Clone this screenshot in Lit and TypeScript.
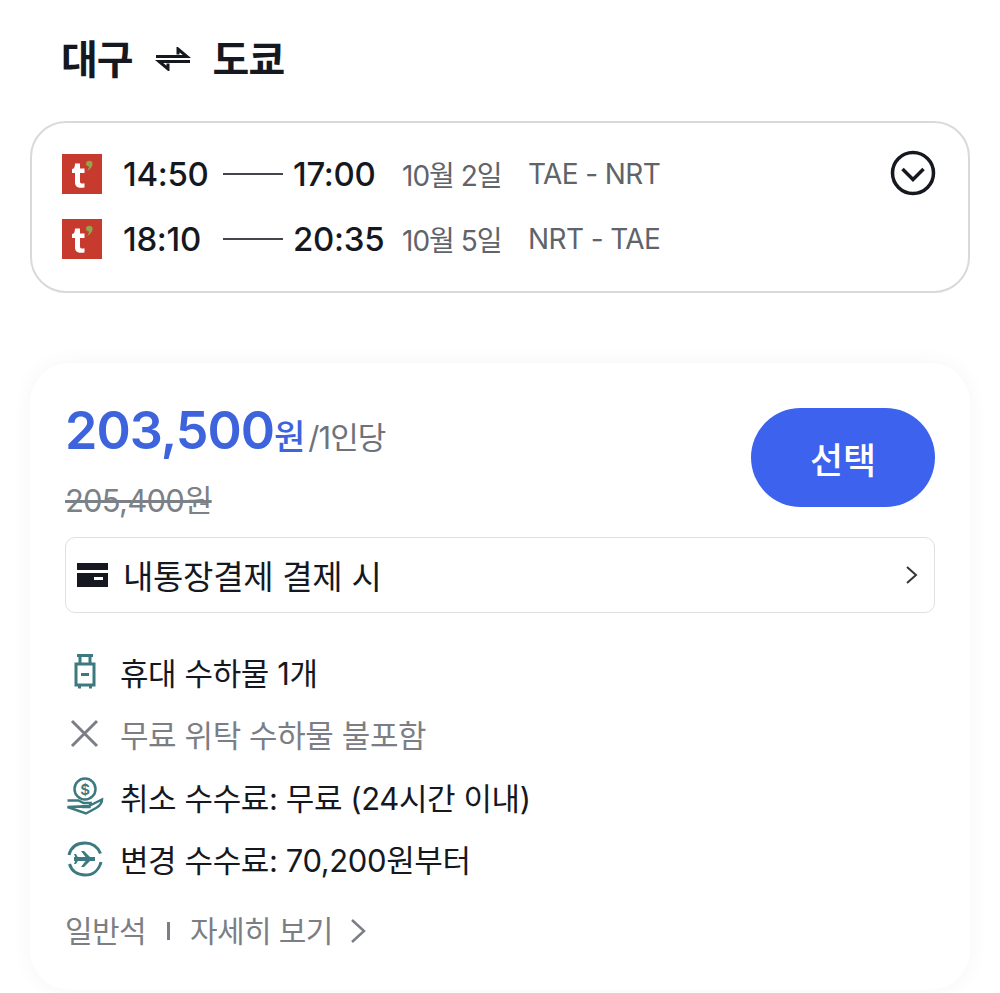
import { LitElement, html, css } from 'lit';
import { customElement } from 'lit/decorators.js';

const logo = html`<svg class="logo" viewBox="0 0 40 40">
  <rect width="40" height="40" fill="#c73a2e"/>
  <path d="M13 9.5h5v5h4.5v4.5H18v8.5c0 2 1.500 2.300 4.500 1.800V33.500c-6 1.200-9.500-.5-9.500-5V19h-3v-4c2 0 3-2 3-5.500z" fill="#fff"/>
  <path d="M25 7.500c2.500-1.500 5-.5 5.500 1.500.5 3-2 6.500-5.500 8 1-1.500 2-3 2-4.500-1.500 0-3-1-3-2.500 0-1 .3-2 1-2.500z" fill="#8fa64a"/>
</svg>`;

@customElement('app-root')
export class AppRoot extends LitElement {

    static styles = css`
        :host {
            display: block;
            width: 1000px;
            height: 993px;
            overflow: hidden;
            background: #fff;
            font-family: "Inter", "Noto Sans CJK KR", sans-serif;
            color: #16181f;
        }
        .title {
            display: flex;
            align-items: center;
            height: 121px;
            padding: 0 0 7px 61px;
            box-sizing: border-box;
            font-size: 40px;
            font-weight: 700;
            letter-spacing: -1px;
        }
        .swap { width: 36px; height: 24px; margin: 3px 22px 0 22px; }
        .flights {
            position: relative;
            margin: 0 30px;
            height: 172px;
            box-sizing: border-box;
            border: 2px solid #d9d9dc;
            border-radius: 36px;
            padding: 31px 0 0 30px;
            display: flex;
            flex-direction: column;
            gap: 25px;
        }
        .row { display: flex; align-items: center; height: 40px; }
        .logo { width: 40px; height: 40px; margin-right: 21px; flex: none; }
        .time { font-size: 33px; font-weight: 500; width: 91px; letter-spacing: -0.3px; white-space: nowrap; }
        .dash { width: 60px; height: 2px; background: #44464c; margin: 0 10px 0 9px; }
        .time.end { width: 90px; }
        .date { font-size: 28px; color: #5f636a; margin-left: 19px; width: 126px; letter-spacing: -1px; white-space: nowrap; }
        .route { font-size: 28px; color: #5f636a; letter-spacing: -0.6px; white-space: nowrap; }
        .toggle { position: absolute; right: 32px; top: 27px; width: 46px; height: 46px; }
        .card {
            margin: 70px 30px 0;
            height: 627px;
            box-sizing: border-box;
            background: #fff;
            border-radius: 40px;
            box-shadow: 0 0 22px rgba(0, 0, 0, 0.045);
            padding: 38px 35px 0 35px;
        }
        .price-row { display: flex; justify-content: space-between; height: 136px; }
        .price { display: flex; align-items: baseline; color: #3d63dd; font-size: 52px; font-weight: 600; line-height: 60px; letter-spacing: -1px; }
        .won { font-size: 34px; font-weight: 500; letter-spacing: 0; }
        .per { font-size: 31px; font-weight: 400; color: #6f7379; letter-spacing: -1px; margin-left: 3px; }
        .old { font-size: 31px; line-height: 40px; margin-top: 13px; color: #7c8087; text-decoration: line-through; letter-spacing: -0.8px; }
        .select {
            width: 184px;
            height: 99px;
            margin-top: 7px;
            border: none;
            border-radius: 50px;
            background: #3d63ee;
            color: #fff;
            font: 500 36px "Noto Sans CJK KR", sans-serif;
        }
        .pay {
            display: flex;
            align-items: center;
            height: 76px;
            box-sizing: border-box;
            border: 1px solid #dfdfe2;
            border-radius: 10px;
            padding: 0 14px 0 11px;
            font-size: 33px;
            letter-spacing: -0.3px;
        }
        .pay .card-icon { width: 31px; height: 24px; margin-right: 15px; }
        .pay .chev { margin-left: auto; width: 16px; height: 24px; }
        .perks { display: flex; flex-direction: column; margin-top: 27px; }
        .perk { display: flex; align-items: center; height: 62.500px; font-size: 31px; letter-spacing: -0.4px; white-space: nowrap; }
        .perk svg { width: 40px; height: 40px; margin-right: 15px; flex: none; }
        .perk.off { color: #7b7f85; }
        .footer { display: flex; align-items: center; margin-top: 17px; color: #7b7f85; font-size: 30px; letter-spacing: -0.6px; height: 44px; }
        .sep { width: 3px; height: 18px; background: #7b7f85; margin: 4px 20px 0 21px; }
        .footer svg { width: 18px; height: 26px; margin: 4px 0 0 16px; }
    `;

    render() {
        return html`
            <div class="title">
                <span>대구</span>
                <svg class="swap" viewBox="0 0 36 24">
                    <path d="M1 9.500h31L23 2v5.500" fill="none" stroke="#16181f" stroke-width="3"/>
                    <path d="M35 14.500H4l9 7.500v-5.500" fill="none" stroke="#16181f" stroke-width="3"/>
                </svg>
                <span>도쿄</span>
            </div>
            <div class="flights">
                <div class="row">
                    ${logo}
                    <span class="time">14:50</span><span class="dash"></span><span class="time end">17:00</span>
                    <span class="date">10월 2일</span><span class="route">TAE - NRT</span>
                </div>
                <div class="row">
                    ${logo}
                    <span class="time">18:10</span><span class="dash"></span><span class="time end">20:35</span>
                    <span class="date">10월 5일</span><span class="route">NRT - TAE</span>
                </div>
                <svg class="toggle" viewBox="0 0 46 46" fill="none" stroke="#16181f" stroke-width="3.500">
                    <circle cx="23" cy="23" r="20.500"/>
                    <path d="M12.500 19l10.500 10.500L33.500 19"/>
                </svg>
            </div>
            <div class="card">
                <div class="price-row">
                    <div>
                        <div class="price">203,500<span class="won">원</span><span class="per">/1인당</span></div>
                        <div class="old">205,400원</div>
                    </div>
                    <button class="select">선택</button>
                </div>
                <div class="pay">
                    <svg class="card-icon" viewBox="0 0 31 24">
                        <path d="M0 0h31v7H0zM0 10h31v14H0z" fill="#16181f"/>
                        <rect x="17" y="14" width="9" height="3" fill="#fff"/>
                    </svg>
                    <span>내통장결제 결제 시</span>
                    <svg class="chev" viewBox="0 0 16 24" fill="none" stroke="#33353a" stroke-width="2">
                        <path d="M3 4l9 8-9 8"/>
                    </svg>
                </div>
                <div class="perks">
                    <div class="perk">
                        <svg viewBox="0 0 40 40" fill="none" stroke="#3d7a80" stroke-width="3">
                            <path d="M12 4.500h16M15 5v8M25 5v8"/>
                            <rect x="11" y="13" width="18" height="21"/>
                            <path d="M16 23.500h8M14.500 34v3.500M25.500 34v3.500"/>
                        </svg>
                        <span>휴대 수하물 1개</span>
                    </div>
                    <div class="perk off">
                        <svg viewBox="0 0 40 40" fill="none" stroke="#7b7f85" stroke-width="3">
                            <path d="M7 7l25 25M32 7L7 32"/>
                        </svg>
                        <span>무료 위탁 수하물 불포함</span>
                    </div>
                    <div class="perk">
                        <svg viewBox="0 0 40 40" fill="none" stroke="#3d7a80" stroke-width="2.500">
                            <circle cx="20" cy="13" r="10.500"/>
                            <path d="M2.500 24.500h11l5 2.500h7l-1 4h-8M24 30l13-6.500c0 5-3 6.500-6 8.500l-10 5.500L2.500 31z"/>
                            <text x="20" y="18.500" font-size="15" font-family="Inter" font-weight="600" fill="#3d7a80" stroke="none" text-anchor="middle">$</text>
                        </svg>
                        <span>취소 수수료: 무료 (24시간 이내)</span>
                    </div>
                    <div class="perk">
                        <svg viewBox="0 0 40 40" fill="none" stroke="#3d7a80" stroke-width="3">
                            <path d="M4 16C6 8 12 4 20 4c7 0 13 4 15.500 10.500"/>
                            <path d="M36 23c-2 8-8 13-16 13-7.500 0-13.500-4-15.500-11"/>
                            <path d="M9 20h21" stroke-width="4"/>
                            <path d="M22 20l-6-8h3l8 8-8 8h-3zM11 20l-2-5h2l3 5-3 5H9z" fill="#3d7a80" stroke="none"/>
                        </svg>
                        <span>변경 수수료: 70,200원부터</span>
                    </div>
                </div>
                <div class="footer">
                    <span>일반석</span><span class="sep"></span><span>자세히 보기</span>
                    <svg viewBox="0 0 18 26" fill="none" stroke="#7b7f85" stroke-width="2.500">
                        <path d="M3 2l12 11L3 24"/>
                    </svg>
                </div>
            </div>
        `;
    }
}
